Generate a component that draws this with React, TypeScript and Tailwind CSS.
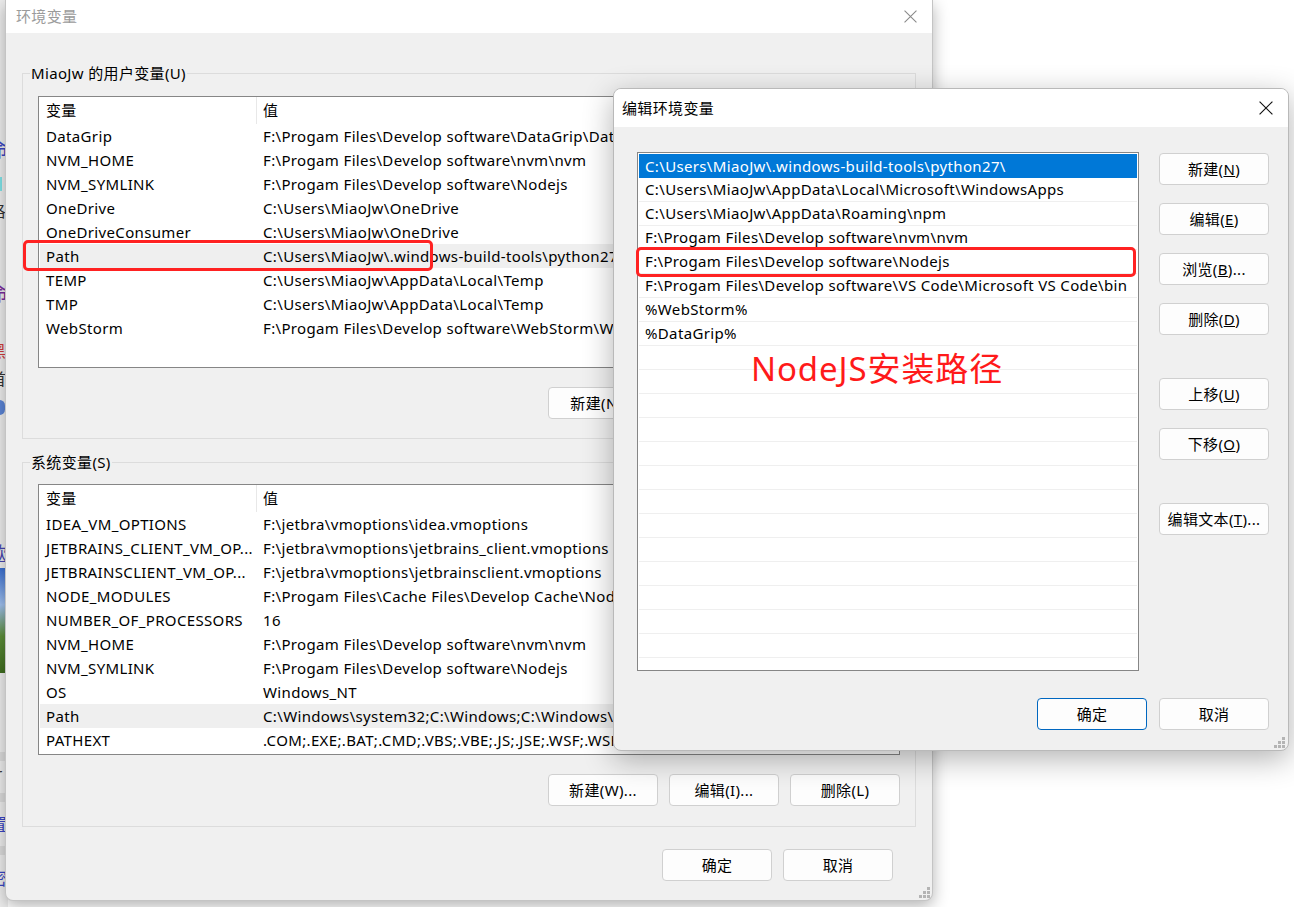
import React from 'react';

const userVars: [string, string][] = [
  ['DataGrip', 'F:\\Progam Files\\Develop software\\DataGrip\\DataGrip 2023.1\\bin'],
  ['NVM_HOME', 'F:\\Progam Files\\Develop software\\nvm\\nvm'],
  ['NVM_SYMLINK', 'F:\\Progam Files\\Develop software\\Nodejs'],
  ['OneDrive', 'C:\\Users\\MiaoJw\\OneDrive'],
  ['OneDriveConsumer', 'C:\\Users\\MiaoJw\\OneDrive'],
  ['Path', 'C:\\Users\\MiaoJw\\.windows-build-tools\\python27\\;C:\\Users\\MiaoJw\\AppData\\Local\\Microsoft\\WindowsApps'],
  ['TEMP', 'C:\\Users\\MiaoJw\\AppData\\Local\\Temp'],
  ['TMP', 'C:\\Users\\MiaoJw\\AppData\\Local\\Temp'],
  ['WebStorm', 'F:\\Progam Files\\Develop software\\WebStorm\\WebStorm 2023.1\\bin'],
];

const sysVars: [string, string][] = [
  ['IDEA_VM_OPTIONS', 'F:\\jetbra\\vmoptions\\idea.vmoptions'],
  ['JETBRAINS_CLIENT_VM_OP...', 'F:\\jetbra\\vmoptions\\jetbrains_client.vmoptions'],
  ['JETBRAINSCLIENT_VM_OP...', 'F:\\jetbra\\vmoptions\\jetbrainsclient.vmoptions'],
  ['NODE_MODULES', 'F:\\Progam Files\\Cache Files\\Develop Cache\\Node\\node_modules'],
  ['NUMBER_OF_PROCESSORS', '16'],
  ['NVM_HOME', 'F:\\Progam Files\\Develop software\\nvm\\nvm'],
  ['NVM_SYMLINK', 'F:\\Progam Files\\Develop software\\Nodejs'],
  ['OS', 'Windows_NT'],
  ['Path', 'C:\\Windows\\system32;C:\\Windows;C:\\Windows\\System32\\Wbem;C:\\Windows\\System32\\WindowsPowerShell\\v1.0\\'],
  ['PATHEXT', '.COM;.EXE;.BAT;.CMD;.VBS;.VBE;.JS;.JSE;.WSF;.WSH;.MSC'],
];

const pathList = [
  'C:\\Users\\MiaoJw\\.windows-build-tools\\python27\\',
  'C:\\Users\\MiaoJw\\AppData\\Local\\Microsoft\\WindowsApps',
  'C:\\Users\\MiaoJw\\AppData\\Roaming\\npm',
  'F:\\Progam Files\\Develop software\\nvm\\nvm',
  'F:\\Progam Files\\Develop software\\Nodejs',
  'F:\\Progam Files\\Develop software\\VS Code\\Microsoft VS Code\\bin',
  '%WebStorm%',
  '%DataGrip%',
];

function Btn({ children, primary = false }: { children: React.ReactNode; primary?: boolean }) {
  return (
    <div
      className={
        primary
          ? 'flex h-[32px] w-[110px] shrink-0 items-center justify-center rounded-[4px] border border-[#0067c0] bg-[#fdfdfd] text-[15px] text-black'
          : 'flex h-[32px] w-[110px] shrink-0 items-center justify-center rounded-[4px] border border-[#d0d0d0] bg-[#fdfdfd] text-[15px] text-black'
      }
    >
      {children}
    </div>
  );
}

function CloseX({ color, size }: { color: string; size: number }) {
  return (
    <svg width={size} height={size} viewBox="0 0 12 12">
      <path d="M0.5 0.5 L11.5 11.5 M11.5 0.5 L0.5 11.5" stroke={color} strokeWidth="1" fill="none" />
    </svg>
  );
}

function Grip() {
  return (
    <svg width="11" height="11" viewBox="0 0 11 11">
      {[
        [8, 0],
        [4, 4],
        [8, 4],
        [0, 8],
        [4, 8],
        [8, 8],
      ].map(([x, y], i) => (
        <rect key={i} x={x} y={y} width="3" height="3" fill="#b4b4b4" />
      ))}
    </svg>
  );
}

function VarTable({ rows, height }: { rows: [string, string][]; height: string }) {
  return (
    <div className={height + ' overflow-hidden border border-[#868686] bg-white px-[1px]'}>
      <div className="flex h-[27px] items-center">
        <div className="flex h-full w-[217px] shrink-0 items-center border-r border-[#e8e8e8] pl-[6px]">变量</div>
        <div className="pl-[6px]">值</div>
      </div>
      {rows.map(([k, v]) => (
        <div key={k + v} className={k === 'Path' ? 'flex h-[24px] items-center bg-[#efefef]' : 'flex h-[24px] items-center'}>
          <div className="w-[217px] shrink-0 overflow-hidden whitespace-nowrap pl-[6px]">{k}</div>
          <div className="whitespace-nowrap pl-[6px]">{v}</div>
        </div>
      ))}
    </div>
  );
}

export default function App() {
  const font = "font-['Noto_Sans','Noto_Sans_CJK_SC',sans-serif]";
  return (
    <div className={'relative h-[907px] w-[1294px] overflow-hidden bg-white text-[15px] tracking-[0.35px] text-black ' + font}>
      {/* background page glimpse at far left */}
      <div className="absolute left-0 top-0 h-full w-[8px] overflow-hidden bg-[#ededed]">
        <span className="absolute left-[-12px] top-[140px] text-[20px] leading-none text-[#3a46c4]">命</span>
        <span className="absolute left-[-3px] top-[177px] h-[14px] w-[5px] bg-[#7fe3e8]"></span>
        <span className="absolute left-[-10px] top-[203px] text-[16px] leading-none text-[#333]">洛</span>
        <span className="absolute left-[-12px] top-[284px] text-[20px] leading-none text-[#7a2c9e]">命</span>
        <span className="absolute left-[-10px] top-[343px] text-[16px] leading-none text-[#d23b3b]">黑</span>
        <span className="absolute left-[-10px] top-[371px] text-[16px] leading-none text-[#333]">首</span>
        <span className="absolute left-[-6px] top-[400px] h-[15px] w-[11px] rounded-full bg-[#5b84d6]"></span>
        <span className="absolute left-[-11px] top-[544px] text-[18px] leading-none text-[#4646b0] underline">欧</span>
        <span className="absolute left-0 top-[568px] h-[105px] w-[6px] bg-[linear-gradient(180deg,#3a6fd1_0%,#9fc0ef_35%,#5d8f3a_65%,#3f6d1f_100%)]"></span>
        <span className="absolute left-0 top-[752px] h-[9px] w-[6px] bg-[#dcdcdc]"></span>
        <span className="absolute left-[-4px] top-[766px] text-[15px] leading-none text-[#333]">r</span>
        <span className="absolute left-0 top-[793px] h-[9px] w-[6px] bg-[#dcdcdc]"></span>
        <span className="absolute left-[-10px] top-[816px] text-[17px] leading-none text-[#3a46c4]">置</span>
        <span className="absolute left-0 top-[846px] h-[9px] w-[6px] bg-[#dcdcdc]"></span>
        <span className="absolute left-[-10px] top-[870px] text-[17px] leading-none text-[#3a46c4]">密</span>
      </div>

      {/* main window: 环境变量 */}
      <div className="absolute left-[5px] top-0 flex h-[901px] w-[928px] flex-col overflow-hidden rounded-b-[8px] border-x border-b border-[#c4c4c4] bg-[#f0f0f0] shadow-[0_5px_16px_rgba(0,0,0,0.3)]">
        <div className="flex h-[33px] shrink-0 items-center justify-between bg-white pl-[10px] pr-[15px]">
          <span className="text-[15px] text-[#9b9b9b]">环境变量</span>
          <CloseX color="#8a8a8a" size={13} />
        </div>
        <div className="relative flex flex-1 flex-col pt-[30px]">
          <fieldset className="mx-[16px] min-w-0 border border-[#dcdcdc] px-0 pb-[19px] pt-[13px]">
            <legend className="ml-[7px] px-[1px] leading-[20px]">MiaoJw 的用户变量(U)</legend>
            <div className="px-[15px]">
              <VarTable rows={userVars} height="h-[272px]" />
              <div className="mt-[19px] flex justify-end gap-[11px]">
                <Btn>新建(N)...</Btn>
                <Btn>编辑(E)...</Btn>
                <Btn>删除(D)</Btn>
              </div>
            </div>
          </fieldset>
          <fieldset className="mx-[16px] mt-[13px] min-w-0 border border-[#dcdcdc] px-0 pb-[20px] pt-[12px]">
            <legend className="ml-[7px] px-[1px] leading-[20px]">系统变量(S)</legend>
            <div className="px-[15px]">
              <VarTable rows={sysVars} height="h-[271px]" />
              <div className="mt-[19px] flex justify-end gap-[11px]">
                <Btn>新建(W)...</Btn>
                <Btn>编辑(I)...</Btn>
                <Btn>删除(L)</Btn>
              </div>
            </div>
          </fieldset>
          <div className="mt-[22px] flex justify-end gap-[11px] pr-[39px]">
            <Btn>确定</Btn>
            <Btn>取消</Btn>
          </div>
          <div className="absolute bottom-[2px] right-[2px]">
            <Grip />
          </div>
        </div>
      </div>

      {/* red annotation around user Path row */}
      <div className="absolute left-[23px] top-[240px] h-[31px] w-[410px] rounded-[5px] border-[3px] border-[#ff2222]"></div>

      {/* edit dialog: 编辑环境变量 */}
      <div className="absolute left-[613px] top-[88px] flex h-[663px] w-[676px] flex-col overflow-hidden rounded-[8px] border border-[#b9b9b9] bg-[#f0f0f0] shadow-[0_8px_30px_rgba(0,0,0,0.3)]">
        <div className="flex h-[38px] shrink-0 items-center justify-between bg-white pl-[8px] pr-[15px]">
          <span className="text-[15px]">编辑环境变量</span>
          <CloseX color="#111" size={14} />
        </div>
        <div className="relative flex flex-1 flex-col pl-[23px] pr-[19px] pt-[25px]">
          <div className="flex gap-[20px]">
            <div className="h-[519px] w-[502px] shrink-0 overflow-hidden border border-[#868686] bg-white p-[1px]">
              {Array.from({ length: 21 }).map((_, i) => (
                <div
                  key={i}
                  className={
                    i === 0
                      ? 'flex h-[24px] items-center whitespace-nowrap bg-[#0078d7] pl-[6px] text-white'
                      : 'flex h-[24px] items-center whitespace-nowrap border-b border-[#efefef] pl-[6px]'
                  }
                >
                  {pathList[i] ?? ''}
                </div>
              ))}
            </div>
            <div className="flex flex-col pt-[1px]">
              <Btn>
                新建(<span className="underline">N</span>)
              </Btn>
              <div className="mt-[18px]">
                <Btn>
                  编辑(<span className="underline">E</span>)
                </Btn>
              </div>
              <div className="mt-[18px]">
                <Btn>
                  浏览(<span className="underline">B</span>)...
                </Btn>
              </div>
              <div className="mt-[18px]">
                <Btn>
                  删除(<span className="underline">D</span>)
                </Btn>
              </div>
              <div className="mt-[43px]">
                <Btn>
                  上移(<span className="underline">U</span>)
                </Btn>
              </div>
              <div className="mt-[18px]">
                <Btn>
                  下移(<span className="underline">O</span>)
                </Btn>
              </div>
              <div className="mt-[43px]">
                <Btn>
                  编辑文本(<span className="underline">T</span>)...
                </Btn>
              </div>
            </div>
          </div>
          <div className="mt-[27px] flex justify-end gap-[12px]">
            <Btn primary>确定</Btn>
            <Btn>取消</Btn>
          </div>
          <div className="absolute bottom-[2px] right-[3px]">
            <Grip />
          </div>
        </div>
      </div>

      {/* red annotation around Nodejs entry */}
      <div className="absolute left-[636px] top-[247px] h-[30px] w-[500px] rounded-[5px] border-[3px] border-[#ff2222]"></div>

      {/* red annotation text */}
      <div className="absolute left-[751px] top-[348px] text-[33px] leading-[42px] tracking-[0.9px] text-[#ff1a1a]">NodeJS安装路径</div>
    </div>
  );
}
